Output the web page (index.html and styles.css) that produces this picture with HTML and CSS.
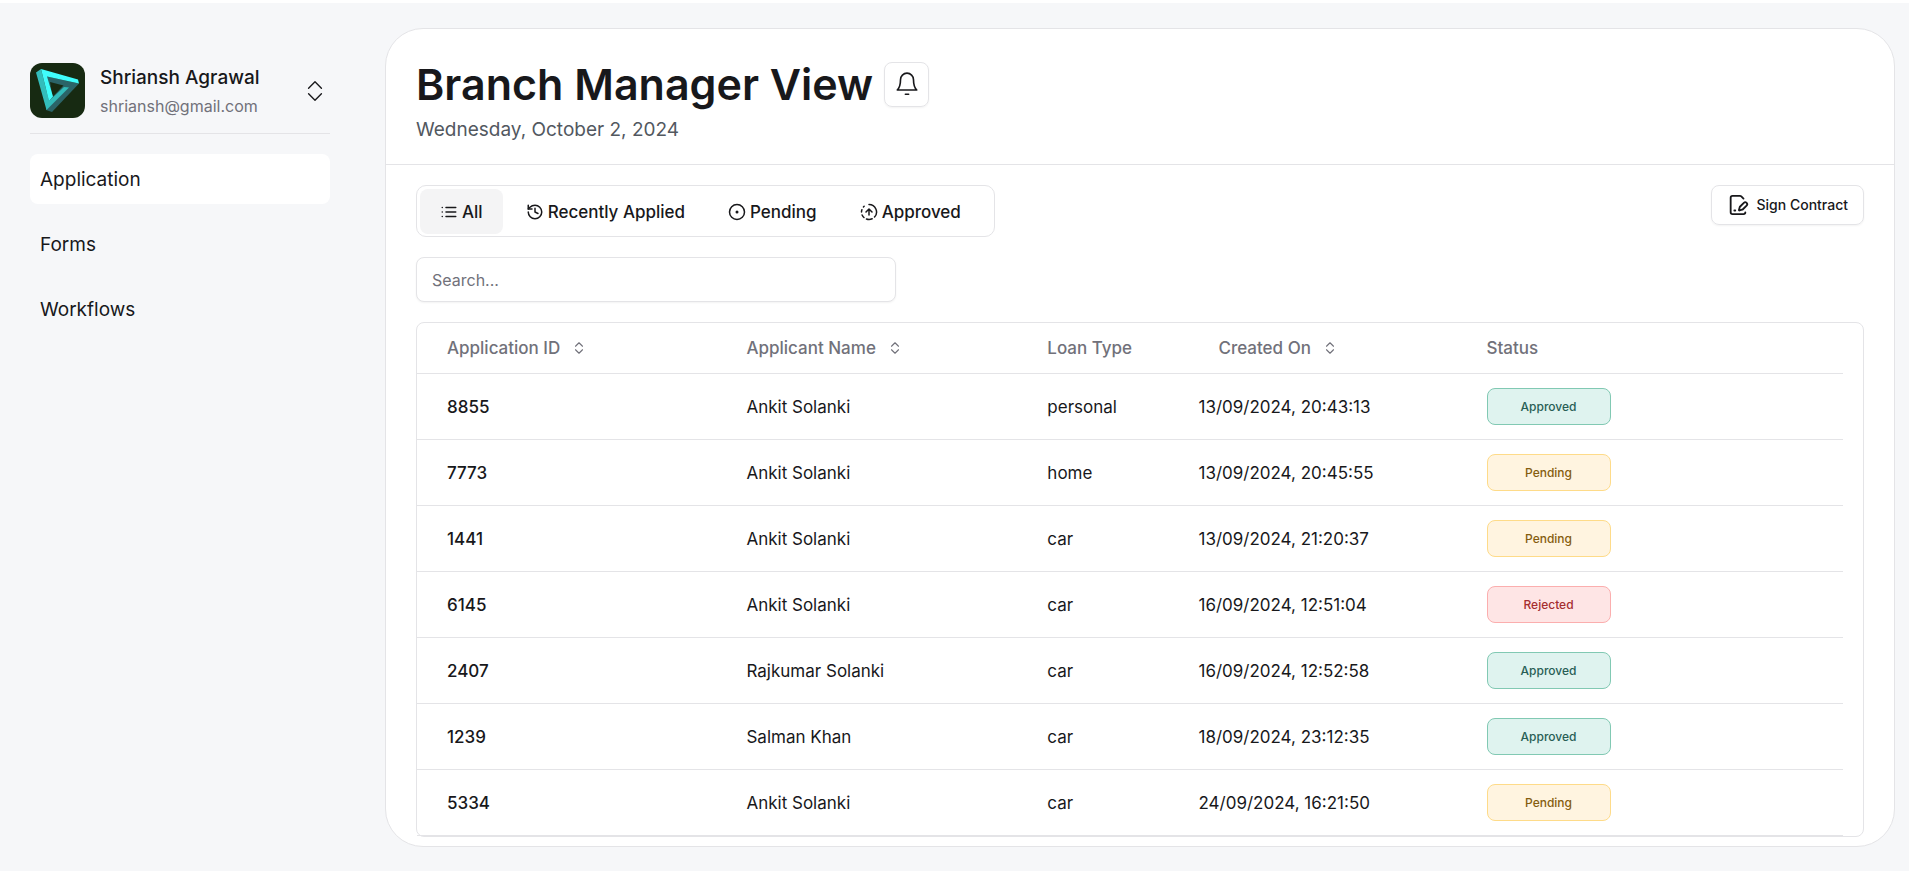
FILE: index.html
```html
<!DOCTYPE html>
<html lang="en">
<head>
<meta charset="utf-8">
<title>Branch Manager View</title>
<link rel="stylesheet" href="styles.css">
</head>
<body>
<div class="app">
  <aside class="sidebar">
    <button class="account" type="button">
      <svg class="avatar" viewBox="0 0 55 55" aria-hidden="true">
        <rect width="55" height="55" fill="#172a12"/>
        <path d="M17 13.500 49 20.500 22 49 16 47z" fill="#2b6468"/>
        <path d="M20 19 33.500 22.500 22.500 34z" fill="#172a12"/>
        <path d="M6 9.500 11 6 19 38 34 24 39 24.500 16.500 47z" fill="#33bdbb"/>
        <path d="M11 6 48 16.500 49 20.500 17 13.500 23 33.500 19 38z" fill="#40fdfb"/>
      </svg>
      <span class="account-text">
        <span class="account-name">Shriansh Agrawal</span>
        <span class="account-mail">shriansh@gmail.com</span>
      </span>
      <svg class="account-caret" viewBox="0 0 24 24" aria-hidden="true"><path d="m5 9 7-7 7 7M5 15l7 7 7-7"/></svg>
    </button>
    <nav class="nav">
      <a class="nav-link is-active" href="#">Application</a>
      <a class="nav-link" href="#">Forms</a>
      <a class="nav-link" href="#">Workflows</a>
    </nav>
  </aside>

  <main class="panel">
    <header class="panel-head">
      <div class="title-row">
        <h1 class="title">Branch Manager View</h1>
        <button class="icon-btn" type="button" aria-label="Notifications">
          <svg class="bell" viewBox="0 0 24 24" aria-hidden="true"><path d="M6 8a6 6 0 0 1 12 0c0 5 1 7.500 3 9.500H3C5 15.500 6 13 6 8z"/><path d="M10.500 21.500h3"/></svg>
        </button>
      </div>
      <p class="date">Wednesday, October 2, 2024</p>
    </header>

    <div class="content">
      <div class="toolbar">
        <div class="tabs" role="tablist">
          <button class="tab is-active" type="button" role="tab" aria-selected="true">
            <svg class="tab-icon" viewBox="0 0 24 24" aria-hidden="true"><path d="M8 6h13M8 12h13M8 18h13M3 6h.01M3 12h.01M3 18h.01"/></svg>All
          </button>
          <button class="tab" type="button" role="tab">
            <svg class="tab-icon" viewBox="0 0 24 24" aria-hidden="true"><path d="M3 12a9 9 0 1 0 9-9 9.750 9.750 0 0 0-6.740 2.740L3 8"/><path d="M3 3v5h5M12 7v5l4 2"/></svg>Recently Applied
          </button>
          <button class="tab" type="button" role="tab">
            <svg class="tab-icon" viewBox="0 0 24 24" aria-hidden="true"><circle cx="12" cy="12" r="10"/><circle cx="12" cy="12" r="1"/></svg>Pending
          </button>
          <button class="tab" type="button" role="tab">
            <svg class="tab-icon" viewBox="0 0 24 24" aria-hidden="true"><path d="M12 2a10 10 0 0 1 7.380 16.750M16 12l-4-4-4 4M12 16V8M2.500 8.875a10 10 0 0 0-.5 3M2.830 16a10 10 0 0 0 2.430 3.400M4.636 5.235a10 10 0 0 1 .891-.857M8.644 21.420a10 10 0 0 0 7.631-.38"/></svg>Approved
          </button>
        </div>
        <button class="sign-btn" type="button">
          <svg class="sign-icon" viewBox="0 0 24 24" aria-hidden="true"><path d="m18 5-2.414-2.414A2 2 0 0 0 14.172 2H6a2 2 0 0 0-2 2v16a2 2 0 0 0 2 2h12a2 2 0 0 0 2-2"/><path d="M21.378 12.626a1 1 0 0 0-3.004-3.004l-4.010 4.012a2 2 0 0 0-.506.854l-.837 2.870a.5.5 0 0 0 .62.620l2.870-.837a2 2 0 0 0 .854-.506z"/><path d="M8 18h1"/></svg>
          Sign Contract
        </button>
      </div>

      <input class="search" type="search" placeholder="Search..." aria-label="Search applications">

      <div class="table-box">
        <table class="table">
          <colgroup><col class="c-id"><col class="c-name"><col class="c-type"><col class="c-date"><col class="c-status"></colgroup>
          <thead>
            <tr>
              <th scope="col"><button class="sort" type="button">Application ID<svg class="sort-icon" viewBox="0 0 16 16" aria-hidden="true"><path d="m4 6 4-4 4 4M4 10l4 4 4-4"/></svg></button></th>
              <th scope="col"><button class="sort" type="button">Applicant Name<svg class="sort-icon" viewBox="0 0 16 16" aria-hidden="true"><path d="m4 6 4-4 4 4M4 10l4 4 4-4"/></svg></button></th>
              <th scope="col">Loan Type</th>
              <th scope="col"><button class="sort is-inset" type="button">Created On<svg class="sort-icon" viewBox="0 0 16 16" aria-hidden="true"><path d="m4 6 4-4 4 4M4 10l4 4 4-4"/></svg></button></th>
              <th scope="col">Status</th>
            </tr>
          </thead>
          <tbody>
            <tr><td class="id">8855</td><td>Ankit Solanki</td><td>personal</td><td>13/09/2024, 20:43:13</td><td><span class="badge approved">Approved</span></td></tr>
            <tr><td class="id">7773</td><td>Ankit Solanki</td><td>home</td><td>13/09/2024, 20:45:55</td><td><span class="badge pending">Pending</span></td></tr>
            <tr><td class="id">1441</td><td>Ankit Solanki</td><td>car</td><td>13/09/2024, 21:20:37</td><td><span class="badge pending">Pending</span></td></tr>
            <tr><td class="id">6145</td><td>Ankit Solanki</td><td>car</td><td>16/09/2024, 12:51:04</td><td><span class="badge rejected">Rejected</span></td></tr>
            <tr><td class="id">2407</td><td>Rajkumar Solanki</td><td>car</td><td>16/09/2024, 12:52:58</td><td><span class="badge approved">Approved</span></td></tr>
            <tr><td class="id">1239</td><td>Salman Khan</td><td>car</td><td>18/09/2024, 23:12:35</td><td><span class="badge approved">Approved</span></td></tr>
            <tr><td class="id">5334</td><td>Ankit Solanki</td><td>car</td><td>24/09/2024, 16:21:50</td><td><span class="badge pending">Pending</span></td></tr>
          </tbody>
        </table>
      </div>
    </div>
  </main>
</div>
</body>
</html>
```
FILE: styles.css
```css
:root {
  --ink: #18181b;
  --muted: #71717a;
  --line: #e4e4e7;
  --page: #f6f7f9;
}
*, *::before, *::after { box-sizing: border-box; }
body {
  margin: 0;
  min-height: 100vh;
  border-top: 3px solid #fff;
  background: var(--page);
  color: var(--ink);
  font-family: Inter, "Liberation Sans", sans-serif;
  font-size: 17px;
  line-height: 24px;
}
button, input { font: inherit; color: inherit; }
button { background: none; border: 0; padding: 0; cursor: pointer; }
svg { fill: none; stroke: currentColor; stroke-width: 2; stroke-linecap: round; stroke-linejoin: round; flex: none; }

.app { display: flex; align-items: flex-start; }

/* Sidebar */
.sidebar { width: 385px; flex: none; padding: 60px 55px 0 30px; }
.account {
  display: flex;
  align-items: center;
  gap: 15px;
  width: 100%;
  padding-bottom: 15px;
  border-bottom: 1px solid var(--line);
  text-align: left;
}
.avatar { width: 55px; height: 55px; border-radius: 12px; stroke: none; }
.account-text { flex: 1; display: flex; flex-direction: column; gap: 4px; padding-top: 3px; }
.account-name { font-size: 19px; font-weight: 500; }
.account-mail { font-size: 16px; color: var(--muted); }
.account-caret { width: 22px; height: 22px; margin-right: 4px; stroke-width: 1.5; }
.nav { display: flex; flex-direction: column; gap: 15px; padding-top: 20px; }
.nav-link {
  padding: 14px 10px 12px;
  border-radius: 8px;
  color: inherit;
  font-size: 19px;
  text-decoration: none;
}
.nav-link.is-active { background: #fff; }

/* Main panel */
.panel {
  flex: 1;
  min-width: 0;
  margin: 25px 14px 24px 0;
  background: #fff;
  border: 1px solid var(--line);
  border-radius: 38px;
}
.panel-head { padding: 29px 30px 22px; border-bottom: 1px solid var(--line); }
.title-row { display: flex; align-items: center; gap: 11px; height: 52px; }
.title { margin: 0; font-size: 43px; line-height: 52px; font-weight: 600; }
.icon-btn {
  display: grid;
  place-items: center;
  width: 45px;
  height: 45px;
  border: 1px solid var(--line);
  border-radius: 8px;
  box-shadow: 0 1px 2px rgba(0, 0, 0, .05);
}
.bell { width: 26px; height: 26px; stroke-width: 1.5; }
.date { margin: 8px 0 0; color: #52585f; font-size: 19px; }

.content { display: flex; flex-direction: column; gap: 20px; padding: 20px 30px 9px; }
.toolbar { display: flex; align-items: flex-start; justify-content: space-between; }
.tabs {
  display: flex;
  gap: 3px;
  padding: 3px 13px 2px 3px;
  border: 1px solid var(--line);
  border-radius: 10px;
}
.tab {
  display: flex;
  align-items: center;
  gap: 4px;
  height: 45px;
  padding: 0 20px;
  border-radius: 8px;
  font-weight: 500;
}
.tab.is-active { background: #f4f4f5; }
.tab-icon { width: 18px; height: 18px; }
.sign-btn {
  display: flex;
  align-items: center;
  gap: 8px;
  height: 40px;
  padding: 0 15px;
  border: 1px solid var(--line);
  border-radius: 8px;
  box-shadow: 0 1px 2px rgba(0, 0, 0, .05);
  font-size: 14px;
  font-weight: 500;
}
.sign-icon { width: 22px; height: 22px; }
.search {
  width: 480px;
  max-width: 100%;
  height: 45px;
  padding: 0 15px;
  border: 1px solid var(--line);
  border-radius: 8px;
  background: #fff;
  box-shadow: 0 1px 2px rgba(0, 0, 0, .05);
  font-size: 16px;
}
.search::placeholder { color: var(--muted); opacity: 1; }

/* Applications table */
.table-box { padding-right: 20px; border: 1px solid var(--line); border-radius: 8px; }
.table { width: 100%; border-collapse: separate; border-spacing: 0; table-layout: fixed; }
.c-id { width: 21%; }
.c-name { width: 21.1%; }
.c-type { width: 10.6%; }
.c-date { width: 20.2%; }
.table th, .table td {
  padding: 0 0 0 30px;
  border-bottom: 1px solid var(--line);
  text-align: left;
  white-space: nowrap;
}
.table th { height: 51px; color: var(--muted); font-weight: 500; }
.table td { height: 66px; }
.table .id { font-weight: 500; }
.sort { display: inline-flex; align-items: center; gap: 12px; }
.sort.is-inset { padding-left: 20px; }
.sort-icon { width: 14px; height: 14px; stroke-width: 1.25; }
.badge {
  display: flex;
  align-items: center;
  justify-content: center;
  width: 124px;
  height: 37px;
  border: 1px solid;
  border-radius: 8px;
  font-size: 12px;
  font-weight: 500;
}
.badge.approved { background: #dff3ef; border-color: #81c9b3; color: #285e55; }
.badge.pending { background: #fff4e0; border-color: #fedb89; color: #855d0f; }
.badge.rejected { background: #fee5e5; border-color: #fbaeae; color: #a52e30; }
```
